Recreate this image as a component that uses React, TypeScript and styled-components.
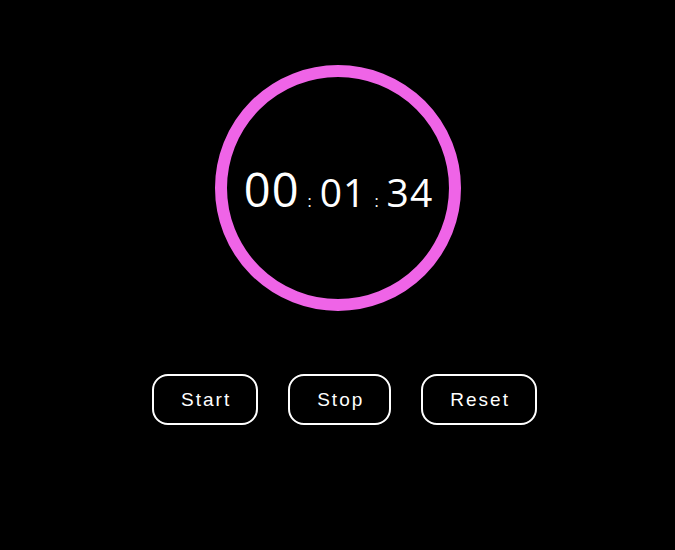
import React from "react";
import styled, { createGlobalStyle } from "styled-components";

const Global = createGlobalStyle`
  html, body { margin: 0; padding: 0; background: #000; }
  body { font-family: "Liberation Sans", Arial, sans-serif; }
`;

const Page = styled.div`
  min-height: 550px;
  display: flex;
  flex-direction: column;
  align-items: center;
  padding-top: 65px;
  box-sizing: border-box;
`;

const Ring = styled.div`
  width: 222px;
  height: 222px;
  border: 12px solid #ef64e7;
  border-radius: 50%;
  display: flex;
  align-items: center;
  justify-content: center;
`;

const Time = styled.div`
  display: flex;
  align-items: baseline;
  color: #fff;
  font-family: "Open Sans", sans-serif;
  font-weight: 400;
  line-height: 1;
  margin-top: 2px;
  margin-left: 2px;
`;

const Digits = styled.span<{ $size: number }>`
  font-size: ${(p) => p.$size}px;
  letter-spacing: 1px;
`;

const Colon = styled.span`
  font-size: 16px;
  margin: 0 8px 0 8px;
`;

const Buttons = styled.div`
  display: flex;
  gap: 30px;
  margin-top: 63px;
  padding-left: 14px;
`;

const Button = styled.button`
  background: #000;
  color: #fff;
  border: 2px solid #fff;
  border-radius: 16px;
  padding: 12px 25px 12px 27px;
  font-family: "Liberation Sans", Arial, sans-serif;
  font-size: 19px;
  letter-spacing: 2px;
  line-height: 23px;
  cursor: pointer;
`;

export default function App() {
  return (
    <>
      <Global />
      <Page>
        <Ring>
          <Time>
            <Digits $size={47}>00</Digits>
            <Colon>:</Colon>
            <Digits $size={39}>01</Digits>
            <Colon>:</Colon>
            <Digits $size={39}>34</Digits>
          </Time>
        </Ring>
        <Buttons>
          <Button>Start</Button>
          <Button>Stop</Button>
          <Button>Reset</Button>
        </Buttons>
      </Page>
    </>
  );
}
